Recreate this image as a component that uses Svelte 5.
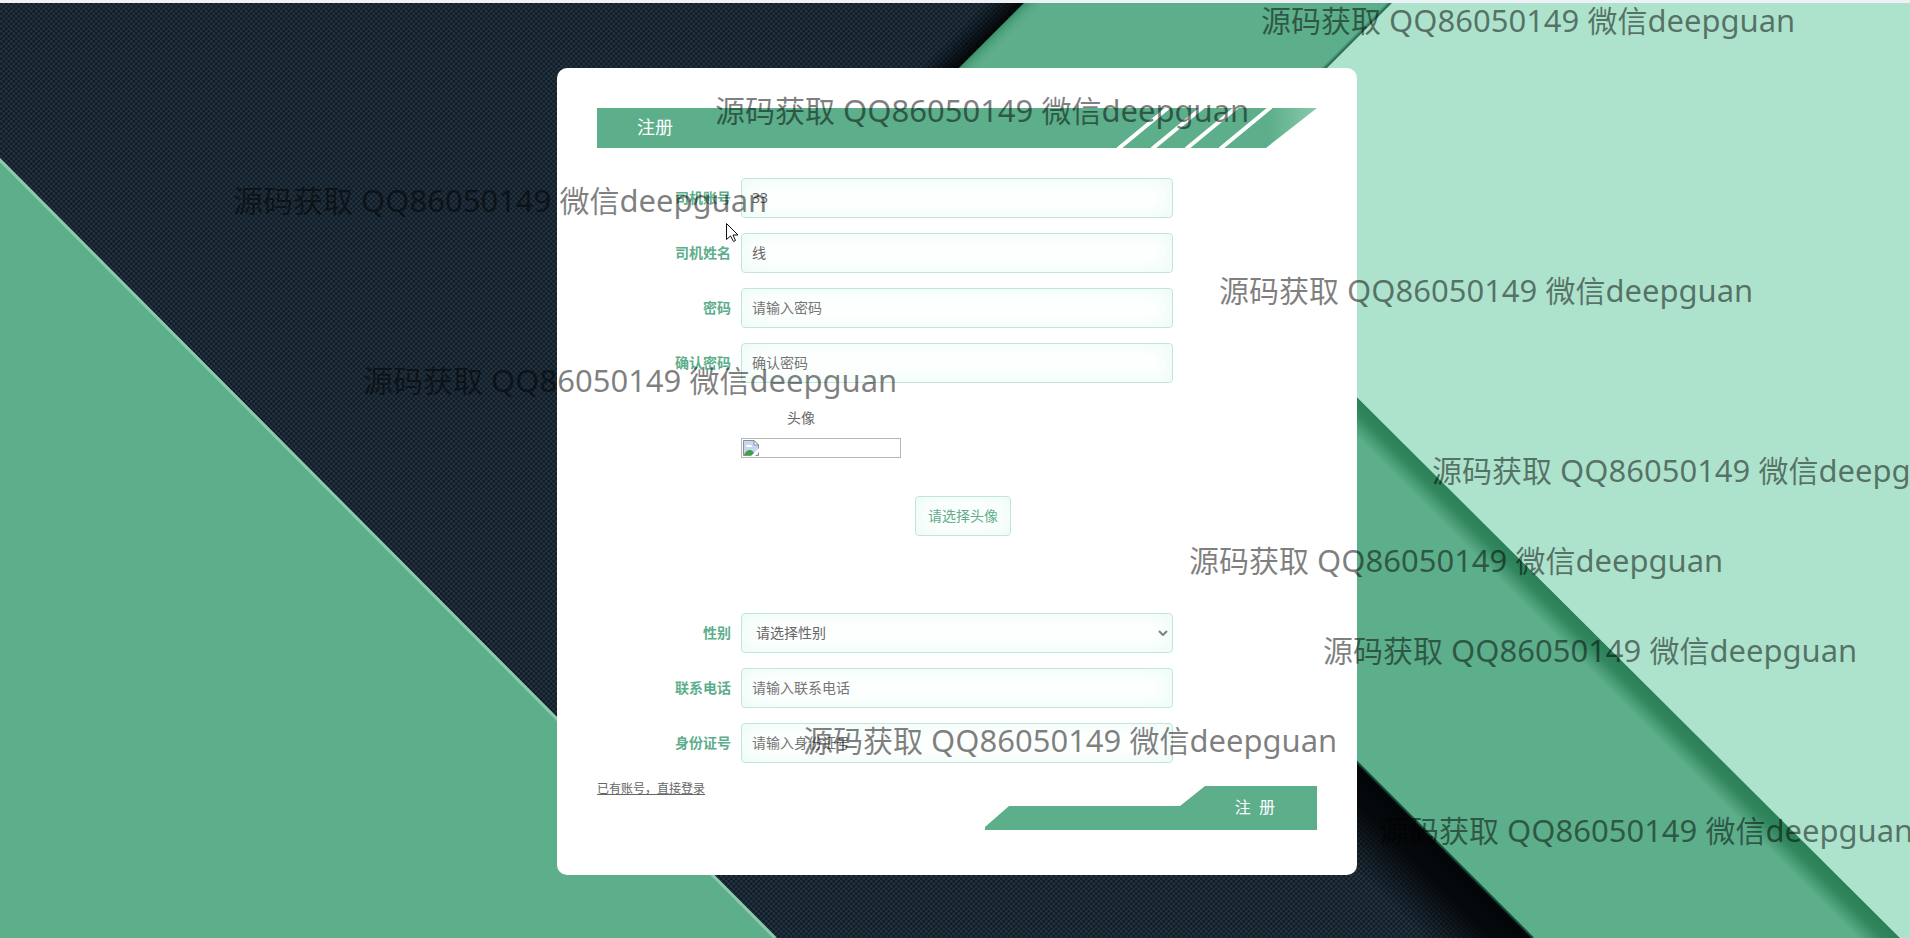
<script>
  const marks = [
    { x: 1261, y: -1 }, { x: 715, y: 89 }, { x: 233, y: 179 }, { x: 1219, y: 269 },
    { x: 363, y: 359 }, { x: 1432, y: 449 }, { x: 1189, y: 539 }, { x: 1323, y: 629 },
    { x: 803, y: 719 }, { x: 1379, y: 809 }
  ];
  const topFields = [
    { id: 'account', label: '司机账号', type: 'text', value: '33', hint: '请输入司机账号' },
    { id: 'name', label: '司机姓名', type: 'text', value: '线', hint: '请输入司机姓名' },
    { id: 'password', label: '密码', type: 'password', value: '', hint: '请输入密码' },
    { id: 'confirm', label: '确认密码', type: 'password', value: '', hint: '确认密码' }
  ];
  const bottomFields = [
    { id: 'phone', label: '联系电话', type: 'text', value: '', hint: '请输入联系电话' },
    { id: 'idcard', label: '身份证号', type: 'text', value: '', hint: '请输入身份证号' }
  ];
</script>

{#snippet field(f)}
  <div class="row">
    <label for={f.id}>{f.label}</label>
    <input class="control" id={f.id} type={f.type} value={f.value} placeholder={f.hint} />
  </div>
{/snippet}

<div class="page">
  <svg class="backdrop" viewBox="0 0 1910 938" preserveAspectRatio="xMidYMid slice" aria-hidden="true">
    <defs>
      <pattern id="mesh" width="5" height="5" patternUnits="userSpaceOnUse">
        <rect width="5" height="5" fill="#111c26" />
        <rect width="2.5" height="2.5" fill="#22333f" />
        <rect x="2.5" y="2.5" width="2.5" height="2.5" fill="#22333f" />
      </pattern>
      <linearGradient id="darkFade" gradientUnits="userSpaceOnUse" x1="1445" y1="849" x2="1390" y2="904">
        <stop offset="0" stop-color="#030608" />
        <stop offset="0.4" stop-color="#030608" stop-opacity="0.9" />
        <stop offset="1" stop-color="#030608" stop-opacity="0" />
      </linearGradient>
      <linearGradient id="topFade" gradientUnits="userSpaceOnUse" x1="992" y1="35" x2="972" y2="15">
        <stop offset="0" stop-color="#030608" />
        <stop offset="0.3" stop-color="#030608" stop-opacity="0.7" />
        <stop offset="1" stop-color="#030608" stop-opacity="0" />
      </linearGradient>
      <linearGradient id="bandFade" gradientUnits="userSpaceOnUse" x1="992" y1="35" x2="1003" y2="46">
        <stop offset="0" stop-color="#27805a" stop-opacity="0.6" />
        <stop offset="1" stop-color="#5dae8b" stop-opacity="0" />
      </linearGradient>
      <linearGradient id="paleFade" gradientUnits="userSpaceOnUse" x1="1600" y1="640" x2="1580" y2="660">
        <stop offset="0" stop-color="#2b8057" />
        <stop offset="0.4" stop-color="#2b8057" stop-opacity="0.85" />
        <stop offset="1" stop-color="#2b8057" stop-opacity="0" />
      </linearGradient>
      <linearGradient id="thinFade" gradientUnits="userSpaceOnUse" x1="1360" y1="35" x2="1357" y2="32">
        <stop offset="0" stop-color="#1d5b40" />
        <stop offset="1" stop-color="#1d5b40" stop-opacity="0" />
      </linearGradient>
      <clipPath id="darkArea"><path d="M0 0H1027L811 216L1533 938H0Z" /></clipPath>
    </defs>
    <rect width="1910" height="938" fill="#5dae8b" />
    <path d="M0 0H1027L811 216L1533 938H0Z" fill="url(#mesh)" />
    <g clip-path="url(#darkArea)">
      <path d="M1027 0L811 216L740 175L915 0Z" fill="url(#topFade)" />
      <path d="M811 216L1533 938H1330L700 330Z" fill="url(#darkFade)" />
    </g>
    <path d="M1027 0L811 216H855L1071 0Z" fill="url(#bandFade)" />
    <path d="M1000 405L1533 938" stroke="#174a36" stroke-width="2" />
    <path d="M1177 218L1901 939H1820L1130 260Z" fill="url(#paleFade)" />
    <path d="M1395 0L1177 218L1170 211L1381 0Z" fill="url(#thinFade)" />
    <path d="M1395 0L1177 218L1900 938H1910V0Z" fill="#ade3cc" />
    <path d="M0 158L777 938H0Z" fill="#5dae8b" />
    <path d="M-2 158L775 938" stroke="#8cc9ad" stroke-width="3" />
  </svg>

  <form class="card" onsubmit={(e) => e.preventDefault()}>
    <header>
      <h1>注册</h1>
      <svg class="stripes" viewBox="0 0 200 40" aria-hidden="true">
        <defs>
          <linearGradient id="tip" x1="0" x2="1" y1="0" y2="0">
            <stop offset="0.76" stop-color="#5dae8b" />
            <stop offset="1" stop-color="#8ac9ae" />
          </linearGradient>
        </defs>
        <path d="M0 0H200L149 40H0Z" fill="url(#tip)" />
        <path d="M52 -1L1 41M86 -1L35 41M120 -1L69 41M154 -1L103 41" stroke="#fff" stroke-width="4" />
      </svg>
    </header>

    {#each topFields as f (f.id)}
      {@render field(f)}
    {/each}

    <div class="avatar">
      <span class="caption">头像</span>
      <div class="preview" role="img" aria-label="头像">
        <svg width="16" height="16" viewBox="0 0 16 16" aria-hidden="true">
          <path d="M0.5 0.5H11L15.5 5V15.5H0.5Z" fill="#c5d6f2" stroke="#8b8f94" />
          <path d="M11 0.5V5H15.5Z" fill="#fff" stroke="#8b8f94" />
          <path d="M3 7a2 2 0 0 1 3-2a2 2 0 0 1 3 2Z" fill="#fff" />
          <path d="M1 15Q3 10 7 10Q10 10 12 15Z" fill="#3fa33e" />
          <path d="M8 16L16 8V12L12 16Z" fill="#fff" />
        </svg>
      </div>
      <button type="button" class="pick">请选择头像</button>
    </div>

    <div class="row">
      <label for="gender">性别</label>
      <div class="select">
        <select class="control" id="gender">
          <option>请选择性别</option>
          <option>男</option>
          <option>女</option>
        </select>
        <svg width="10" height="6" viewBox="0 0 10 6" aria-hidden="true">
          <path d="M1 1L5 5L9 1" fill="none" stroke="#7b8380" stroke-width="2" />
        </svg>
      </div>
    </div>

    {#each bottomFields as f (f.id)}
      {@render field(f)}
    {/each}

    <footer>
      <a href="#login">已有账号，直接登录</a>
      <button type="submit" class="submit">注&nbsp; 册</button>
    </footer>
  </form>

  <div class="marks" aria-hidden="true">
    {#each marks as m}
      <span class="mark" style="left:{m.x}px; top:{m.y}px">源码获取<span class="latin">{' QQ86050149 '}</span>微信<span class="latin">deepguan</span></span>
    {/each}
  </div>

  <svg class="cursor" width="13" height="20" viewBox="0 0 13 20" aria-hidden="true">
    <path d="M0.5 0.5V16.5L4.5 13L7.5 18.5L9.5 17.5L7 12H12Z" fill="#fff" stroke="#111" />
  </svg>
</div>

<style>
  :global(body) {
    margin: 0;
    background: #eef2f6;
  }

  .page {
    position: relative;
    box-sizing: border-box;
    min-height: 100vh;
    padding: 68px 0 63px 4px;
    overflow: hidden;
    font: 14px/20px "Noto Sans", "Noto Sans CJK SC", sans-serif;
    color: #666;
  }

  .backdrop {
    position: absolute;
    inset: 0;
    width: 100%;
    height: 100%;
  }

  .page::before {
    content: "";
    position: absolute;
    inset: 0 0 auto;
    height: 3px;
    background: #eef2f6;
    z-index: 1;
  }

  .card {
    position: relative;
    box-sizing: border-box;
    width: 800px;
    max-width: 100%;
    margin: 0 auto;
    padding: 40px 40px 45px;
    border-radius: 10px;
    background: #fff;
  }

  header {
    display: flex;
    justify-content: space-between;
    height: 40px;
    margin-bottom: 30px;
    background: linear-gradient(#5dae8b, #5dae8b) left / calc(100% - 199px) 100% no-repeat;
  }

  h1 {
    margin: 0;
    padding-left: 40px;
    font-size: 18px;
    line-height: 38px;
    font-weight: 400;
    color: #fff;
  }

  .stripes {
    width: 200px;
    height: 40px;
  }

  .row {
    display: grid;
    grid-template-columns: 20% 60%;
    margin-bottom: 15px;
  }

  label {
    padding-right: 10px;
    text-align: right;
    line-height: 40px;
    font-weight: 600;
    color: #5dae8b;
  }

  .control,
  .pick {
    box-sizing: border-box;
    height: 40px;
    border: 1px solid #c1e5d8;
    border-radius: 4px;
    background: #fff;
    box-shadow: inset 0 0 24px #e8fbf4;
    font: inherit;
    color: #666;
  }

  .control {
    width: 100%;
    padding: 0 10px 2px;
  }

  .control::placeholder {
    color: #757575;
  }

  .select {
    position: relative;
  }

  select.control {
    appearance: none;
    padding: 0 14px;
  }

  .select svg {
    position: absolute;
    right: 5px;
    top: 17px;
  }

  .avatar {
    display: flex;
    flex-direction: column;
    align-items: flex-start;
    margin: 0 20% 77px;
  }

  .caption {
    width: 120px;
    margin: 10px 0;
    text-align: center;
  }

  .preview {
    box-sizing: border-box;
    display: flex;
    width: 160px;
    height: 20px;
    padding: 1px;
    border: 1px solid #b5b5b5;
  }

  .pick {
    align-self: center;
    margin: 38px 0 0 12px;
    padding: 0 12px;
    color: #5dae8b;
  }

  footer {
    display: flex;
    justify-content: space-between;
    align-items: flex-start;
  }

  a {
    font-size: 12px;
    line-height: 22px;
    color: #666;
    text-decoration: underline;
  }

  .submit {
    width: 332px;
    height: 44px;
    margin-top: 8px;
    padding: 0 42px 2px;
    border: 0;
    background: #5dae8b;
    clip-path: polygon(0 41px, 24px 20px, 195px 20px, 220px 0, 100% 0, 100% 100%, 0 100%);
    font: 16px/24px "Noto Sans", "Noto Sans CJK SC", sans-serif;
    text-align: right;
    color: #fff;
  }

  .marks {
    position: absolute;
    inset: 0;
    pointer-events: none;
  }

  .mark {
    position: absolute;
    font-size: 30px;
    line-height: 42px;
    white-space: pre;
    color: rgba(0, 0, 0, 0.5);
  }

  .latin {
    font-size: 31px;
  }

  .cursor {
    position: absolute;
    left: 726px;
    top: 223px;
  }
</style>
